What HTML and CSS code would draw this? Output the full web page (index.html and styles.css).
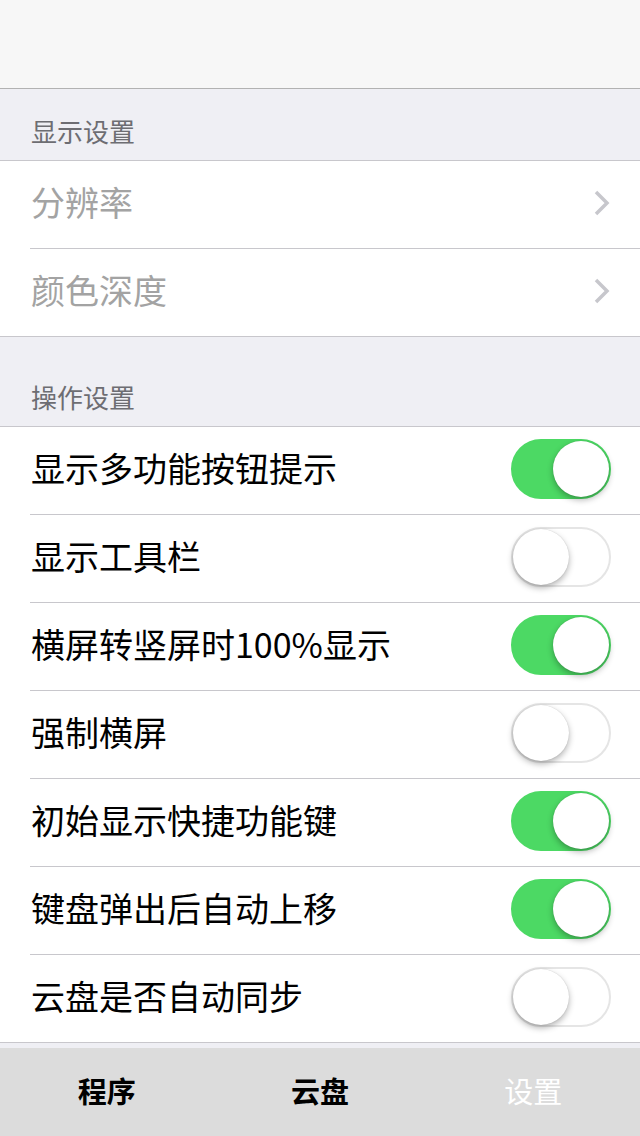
FILE: index.html
```html
<!DOCTYPE html>
<html lang="zh-CN">
<head>
    <meta charset="UTF-8">
    <meta name="viewport" content="width=device-width, initial-scale=1.0">
    <title>设置</title>
    <link rel="stylesheet" href="styles.css">
</head>
<body>
    <div class="navbar"></div>

    <div class="group-header first">显示设置</div>
    <div class="group">
        <div class="row muted">
            <span>分辨率</span>
            <svg class="chevron" width="16" height="26" viewBox="0 0 16 26"><path d="M2 2 L13 13 L2 24" fill="none" stroke="#c7c7cc" stroke-width="3.5"/></svg>
        </div>
        <div class="row muted">
            <span>颜色深度</span>
            <svg class="chevron" width="16" height="26" viewBox="0 0 16 26"><path d="M2 2 L13 13 L2 24" fill="none" stroke="#c7c7cc" stroke-width="3.5"/></svg>
        </div>
    </div>

    <div class="group-header">操作设置</div>
    <div class="group">
        <div class="row"><span>显示多功能按钮提示</span><div class="switch on"><div class="knob"></div></div></div>
        <div class="row"><span>显示工具栏</span><div class="switch"><div class="knob"></div></div></div>
        <div class="row"><span>横屏转竖屏时100%显示</span><div class="switch on"><div class="knob"></div></div></div>
        <div class="row"><span>强制横屏</span><div class="switch"><div class="knob"></div></div></div>
        <div class="row"><span>初始显示快捷功能键</span><div class="switch on"><div class="knob"></div></div></div>
        <div class="row"><span>键盘弹出后自动上移</span><div class="switch on"><div class="knob"></div></div></div>
        <div class="row"><span>云盘是否自动同步</span><div class="switch"><div class="knob"></div></div></div>
    </div>

    <div class="tabbar">
        <div class="tab">程序</div>
        <div class="tab">云盘</div>
        <div class="tab active">设置</div>
    </div>
</body>
</html>
```

FILE: styles.css
```css
body {
    margin: 0;
    padding: 0;
    height: 1136px;
    overflow: hidden;
    background-color: #efeff4;
    font-family: "Noto Sans CJK SC", "Noto Sans", sans-serif;
}
.navbar {
    height: 88px;
    background-color: #f7f7f7;
    border-bottom: 1px solid #b2b2b2;
}
.group-header {
    height: 89px;
    box-sizing: border-box;
    display: flex;
    align-items: flex-end;
    padding: 0 0 14px 31px;
    font-size: 26px;
    line-height: 30px;
    color: #6d6d72;
}
.group-header.first {
    height: 71px;
}
.group {
    background-color: #fff;
    border-top: 1px solid #c8c7cc;
    border-bottom: 1px solid #c8c7cc;
}
.row {
    height: 88px;
    box-sizing: border-box;
    margin-left: 30px;
    padding: 0 30px 3px 0;
    display: flex;
    align-items: center;
    justify-content: space-between;
    border-bottom: 1px solid #c8c7cc;
    font-size: 34px;
    color: #000;
}
.row:last-child {
    height: 87px;
    border-bottom: none;
}
.row span {
    padding-left: 1px;
    margin-bottom: 4px;
}
.row.muted {
    color: #a3a3a3;
}
.switch {
    position: relative;
    width: 100px;
    height: 60px;
    box-sizing: border-box;
    border: 2px solid #e5e5e5;
    border-radius: 30px;
    background-color: #fff;
    margin-right: -1px;
}
.switch .knob {
    position: absolute;
    top: 0;
    left: 0;
    width: 56px;
    height: 56px;
    border-radius: 50%;
    background-color: #fff;
    box-shadow: 0 3px 6px rgba(0, 0, 0, 0.3), 0 0 1px rgba(0, 0, 0, 0.2);
}
.switch.on {
    background-color: #4cd964;
    border-color: #4cd964;
}
.switch.on .knob {
    left: auto;
    right: 0;
}
.tabbar {
    position: absolute;
    left: 0;
    right: 0;
    bottom: 0;
    height: 88px;
    background-color: #dcdcdc;
    display: flex;
}
.tab {
    flex: 1;
    display: flex;
    align-items: center;
    justify-content: center;
    padding-bottom: 4px;
    font-size: 29px;
    font-weight: bold;
    color: #000;
}
.tab.active {
    color: #fff;
    font-weight: normal;
}
```
